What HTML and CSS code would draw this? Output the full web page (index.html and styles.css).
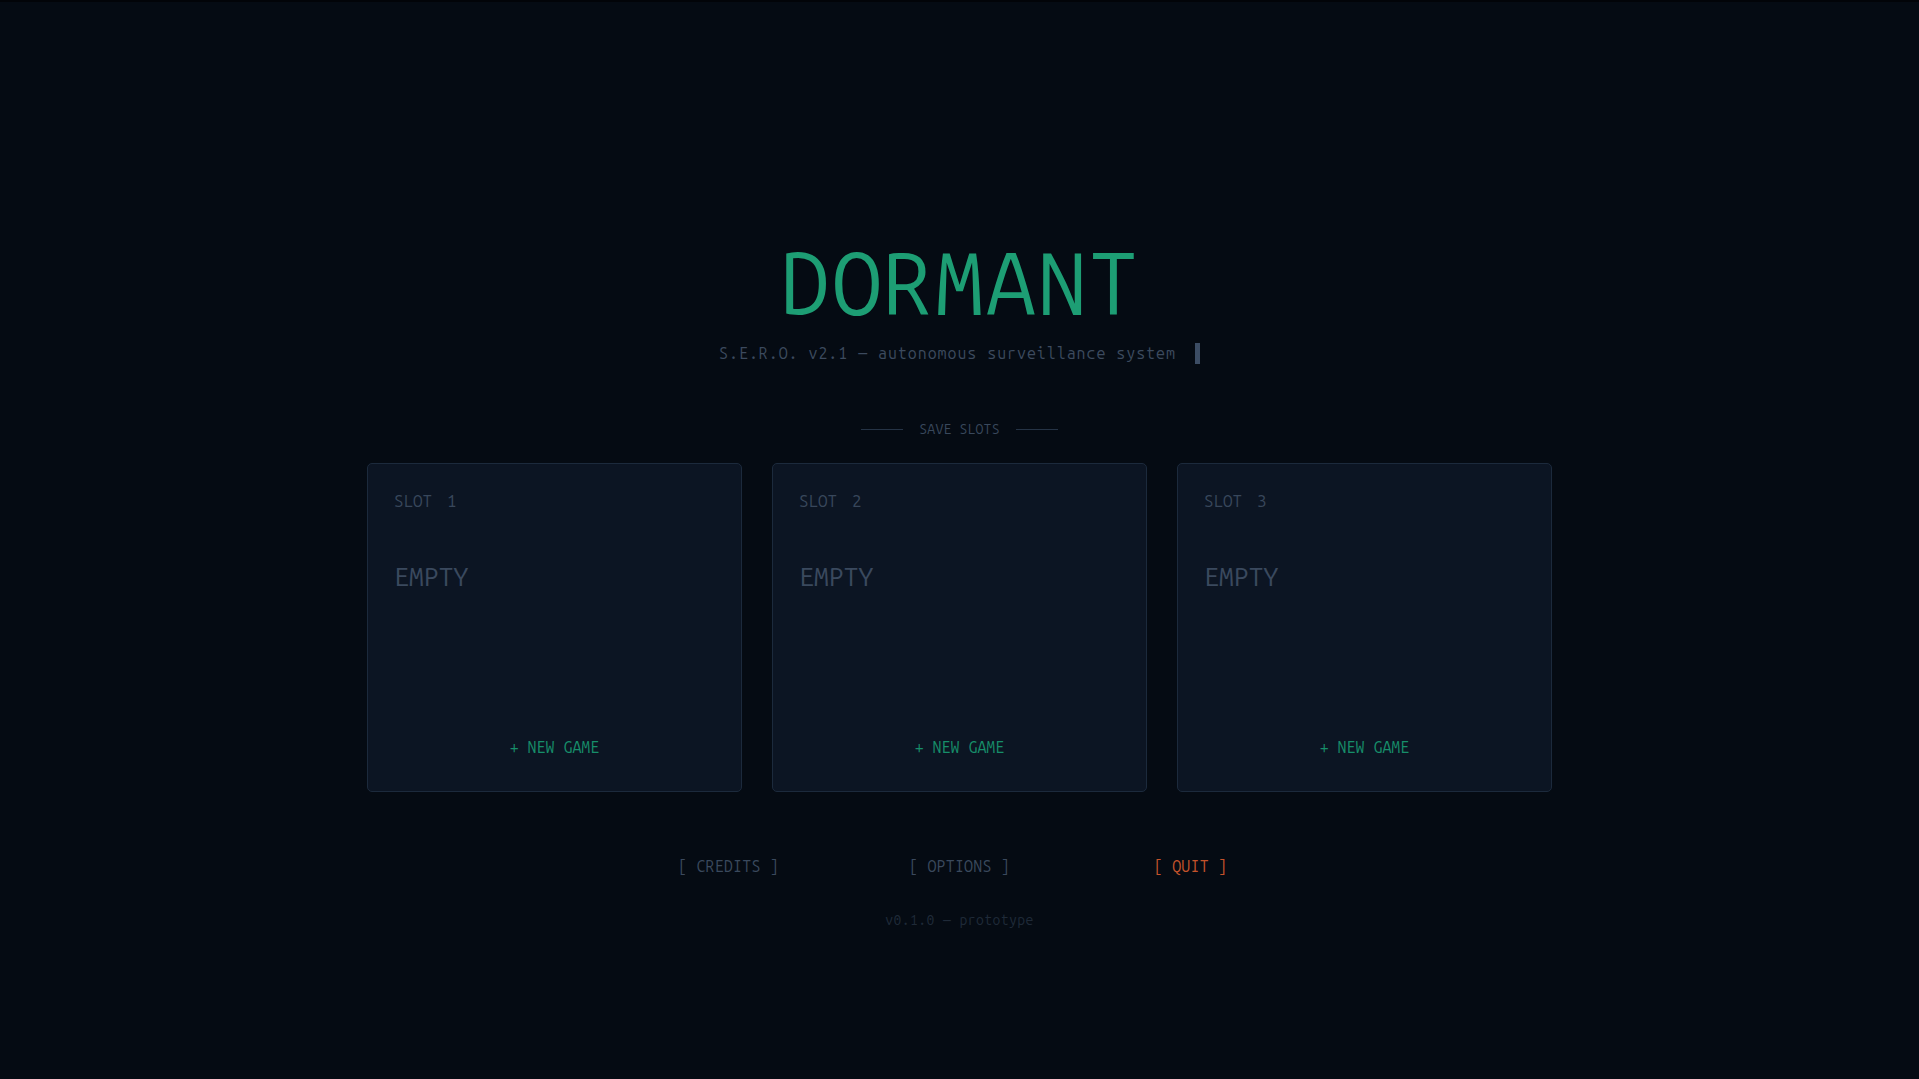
FILE: index.html
```html
<!DOCTYPE html>
<html lang="en">
<head>
<meta charset="utf-8">
<title>DORMANT</title>
<link rel="stylesheet" href="styles.css">
</head>
<body>
<main class="screen">
  <header class="hero">
    <h1 class="title">DORMANT</h1>
    <p class="subtitle">S.E.R.O. v2.1 — autonomous surveillance system<span class="cursor"></span></p>
  </header>

  <section class="slots">
    <div class="slots-label">
      <span class="rule"></span>
      <span class="label-text">SAVE SLOTS</span>
      <span class="rule"></span>
    </div>
    <div class="slot-grid">
      <div class="slot-card">
        <div class="slot-id"><span>SLOT</span><span>1</span></div>
        <div class="slot-state">EMPTY</div>
        <button class="slot-action">+ NEW GAME</button>
      </div>
      <div class="slot-card">
        <div class="slot-id"><span>SLOT</span><span>2</span></div>
        <div class="slot-state">EMPTY</div>
        <button class="slot-action">+ NEW GAME</button>
      </div>
      <div class="slot-card">
        <div class="slot-id"><span>SLOT</span><span>3</span></div>
        <div class="slot-state">EMPTY</div>
        <button class="slot-action">+ NEW GAME</button>
      </div>
    </div>
  </section>

  <footer class="footer">
    <nav class="menu">
      <button class="menu-item">[ CREDITS ]</button>
      <button class="menu-item">[ OPTIONS ]</button>
      <button class="menu-item menu-quit">[ QUIT ]</button>
    </nav>
    <p class="version">v0.1.0 — prototype</p>
  </footer>
</main>
</body>
</html>
```
FILE: styles.css
```css
* {
  box-sizing: border-box;
}

html, body {
  margin: 0;
  padding: 0;
}

body {
  min-height: 100vh;
  background: #050b13;
  border-top: 2px solid #020408;
  font-family: "Ubuntu Mono", "DejaVu Sans Mono", monospace;
  color: #3b4a5e;
}

.screen {
  display: flex;
  flex-direction: column;
  align-items: center;
  padding-top: 237px;
}

.hero {
  display: flex;
  flex-direction: column;
  align-items: center;
}

.title {
  margin: 0;
  font-size: 88px;
  line-height: 1;
  font-weight: 400;
  letter-spacing: 2px;
  padding-left: 2px;
  color: #1d9e74;
}

.subtitle {
  margin: 16px 0 0;
  font-size: 16px;
  line-height: 21px;
  letter-spacing: 0.97px;
  color: #3c4a5e;
}

.cursor {
  display: inline-block;
  vertical-align: top;
  width: 5px;
  height: 21px;
  margin-left: 19px;
  background: #3c4d64;
}

.slots {
  display: flex;
  flex-direction: column;
  align-items: center;
  margin-top: 58px;
}

.slots-label {
  display: flex;
  align-items: center;
  gap: 16px;
  height: 14px;
}

.rule {
  display: block;
  width: 42px;
  height: 1px;
  background: #253345;
}

.label-text {
  font-size: 14px;
  line-height: 1;
  letter-spacing: 0.2px;
  color: #39485c;
}

.slot-grid {
  display: grid;
  grid-template-columns: repeat(3, 375px);
  gap: 30px;
  margin-top: 27px;
}

.slot-card {
  display: flex;
  flex-direction: column;
  height: 329px;
  padding: 28px 26px 36px;
  background: #0c1523;
  border: 1px solid #1c2a3c;
  border-radius: 5px;
}

.slot-id {
  display: flex;
  gap: 15px;
  font-size: 17px;
  line-height: 1;
  letter-spacing: 0;
  color: #38475b;
}

.slot-state {
  margin-top: 54px;
  font-size: 27px;
  line-height: 1;
  letter-spacing: -0.3px;
  color: #3a495e;
}

.slot-action {
  margin-top: auto;
  align-self: center;
  padding: 0;
  border: 0;
  background: none;
  font-family: inherit;
  font-size: 16px;
  line-height: 1;
  letter-spacing: 0;
  color: #178e6a;
  cursor: pointer;
}

.footer {
  display: flex;
  flex-direction: column;
  align-items: center;
  margin-top: 66px;
}

.menu {
  display: grid;
  grid-template-columns: repeat(3, 200px);
  gap: 31px;
}

.menu-item {
  padding: 0;
  border: 0;
  background: none;
  font-family: inherit;
  font-size: 16px;
  line-height: 1;
  letter-spacing: 0.2px;
  text-align: center;
  color: #3a495d;
  cursor: pointer;
}

.menu-quit {
  color: #c4532b;
}

.version {
  margin: 39px 0 0;
  font-size: 14px;
  line-height: 1;
  letter-spacing: 0.4px;
  color: #1f2a38;
}
```
